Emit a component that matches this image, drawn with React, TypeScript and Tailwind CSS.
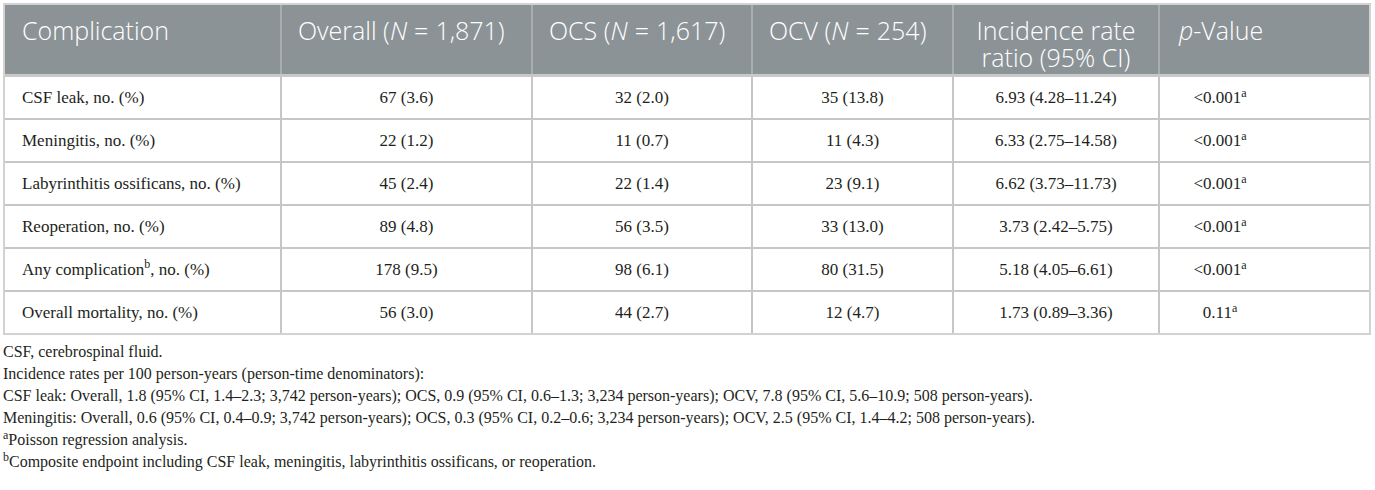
import React from 'react';

type Row = {
  label: React.ReactNode;
  overall: string;
  ocs: string;
  ocv: string;
  irr: string;
  p: string;
};

const rows: Row[] = [
  { label: 'CSF leak, no. (%)', overall: '67 (3.6)', ocs: '32 (2.0)', ocv: '35 (13.8)', irr: '6.93 (4.28–11.24)', p: '<0.001' },
  { label: 'Meningitis, no. (%)', overall: '22 (1.2)', ocs: '11 (0.7)', ocv: '11 (4.3)', irr: '6.33 (2.75–14.58)', p: '<0.001' },
  { label: 'Labyrinthitis ossificans, no. (%)', overall: '45 (2.4)', ocs: '22 (1.4)', ocv: '23 (9.1)', irr: '6.62 (3.73–11.73)', p: '<0.001' },
  { label: 'Reoperation, no. (%)', overall: '89 (4.8)', ocs: '56 (3.5)', ocv: '33 (13.0)', irr: '3.73 (2.42–5.75)', p: '<0.001' },
  {
    label: (
      <>
        Any complication<sup className="text-[12px]">b</sup>, no. (%)
      </>
    ),
    overall: '178 (9.5)', ocs: '98 (6.1)', ocv: '80 (31.5)', irr: '5.18 (4.05–6.61)', p: '<0.001',
  },
  { label: 'Overall mortality, no. (%)', overall: '56 (3.0)', ocs: '44 (2.7)', ocv: '12 (4.7)', irr: '1.73 (0.89–3.36)', p: '0.11' },
];

const cols = 'grid grid-cols-[277px_251px_220px_201px_206px_209px]';
const th = 'border-r-2 border-[#a9afb1] pt-[12px] text-[25px] leading-[27px] font-light text-white';
const td = 'flex items-center border-r-2 border-[#c6c6c6]';

// group size heading with the wide math "=" of the original
function N({ n }: { n: string }) {
  return (
    <>
      (<i>N</i>
      <span className="px-[7px]">=</span>
      {n})
    </>
  );
}

export default function App() {
  return (
    <div className="min-h-[490px] bg-white text-[#231f20]" style={{ fontFamily: '"Liberation Serif", "Times New Roman", serif' }}>
      <div className="pl-[3px] pt-[3px]">
        <div className="w-[1368px] border-2 border-[#d2d2d2]">
          {/* Header */}
          <div
            className={`${cols} h-[72px] bg-[#8c9397] border-b-[3px] border-[#c9c9c9]`}
            style={{ fontFamily: '"Open Sans", "Noto Sans", sans-serif' }}
          >
            <div className={`${th} pl-[17px]`}>Complication</div>
            <div className={`${th} pl-[16px] whitespace-nowrap`}>
              Overall <N n="1,871" />
            </div>
            <div className={`${th} pl-[16px] whitespace-nowrap`}>
              OCS <N n="1,617" />
            </div>
            <div className={`${th} pl-[16px] whitespace-nowrap`}>
              OCV <N n="254" />
            </div>
            <div className={`${th} text-center`}>
              Incidence rate
              <br />
              ratio (95% CI)
            </div>
            <div className="pl-[19px] pt-[12px] text-[25px] leading-[27px] font-light text-white">
              <i>p</i>-Value
            </div>
          </div>

          {/* Body */}
          {rows.map((r, i) => (
            <div
              key={i}
              className={`${cols} text-[17px] ${i === rows.length - 1 ? 'h-[41px]' : 'h-[43px] border-b-2 border-[#c6c6c6]'}`}
            >
              <div className={`${td} pl-[17px]`}>{r.label}</div>
              <div className={`${td} justify-center`}>{r.overall}</div>
              <div className={`${td} justify-center`}>{r.ocs}</div>
              <div className={`${td} justify-center`}>{r.ocv}</div>
              <div className={`${td} justify-center`}>{r.irr}</div>
              <div className="flex items-center pl-[28px]">
                <span className="inline-block w-[64px] text-center">
                  {r.p}
                  <sup className="text-[12px]">a</sup>
                </span>
              </div>
            </div>
          ))}
        </div>
      </div>

      {/* Footnotes */}
      <div className="pl-[3px] pt-[6px] text-[16px] leading-[22px]">
        <p>CSF, cerebrospinal fluid.</p>
        <p>Incidence rates per 100 person-years (person-time denominators):</p>
        <p>
          CSF leak: Overall, 1.8 (95% CI, 1.4–2.3; 3,742 person-years); OCS, 0.9 (95% CI, 0.6–1.3; 3,234 person-years); OCV, 7.8 (95% CI, 5.6–10.9; 508 person-years).
        </p>
        <p>
          Meningitis: Overall, 0.6 (95% CI, 0.4–0.9; 3,742 person-years); OCS, 0.3 (95% CI, 0.2–0.6; 3,234 person-years); OCV, 2.5 (95% CI, 1.4–4.2; 508 person-years).
        </p>
        <p>
          <sup className="text-[12px]">a</sup>Poisson regression analysis.
        </p>
        <p>
          <sup className="text-[12px]">b</sup>Composite endpoint including CSF leak, meningitis, labyrinthitis ossificans, or reoperation.
        </p>
      </div>
    </div>
  );
}
